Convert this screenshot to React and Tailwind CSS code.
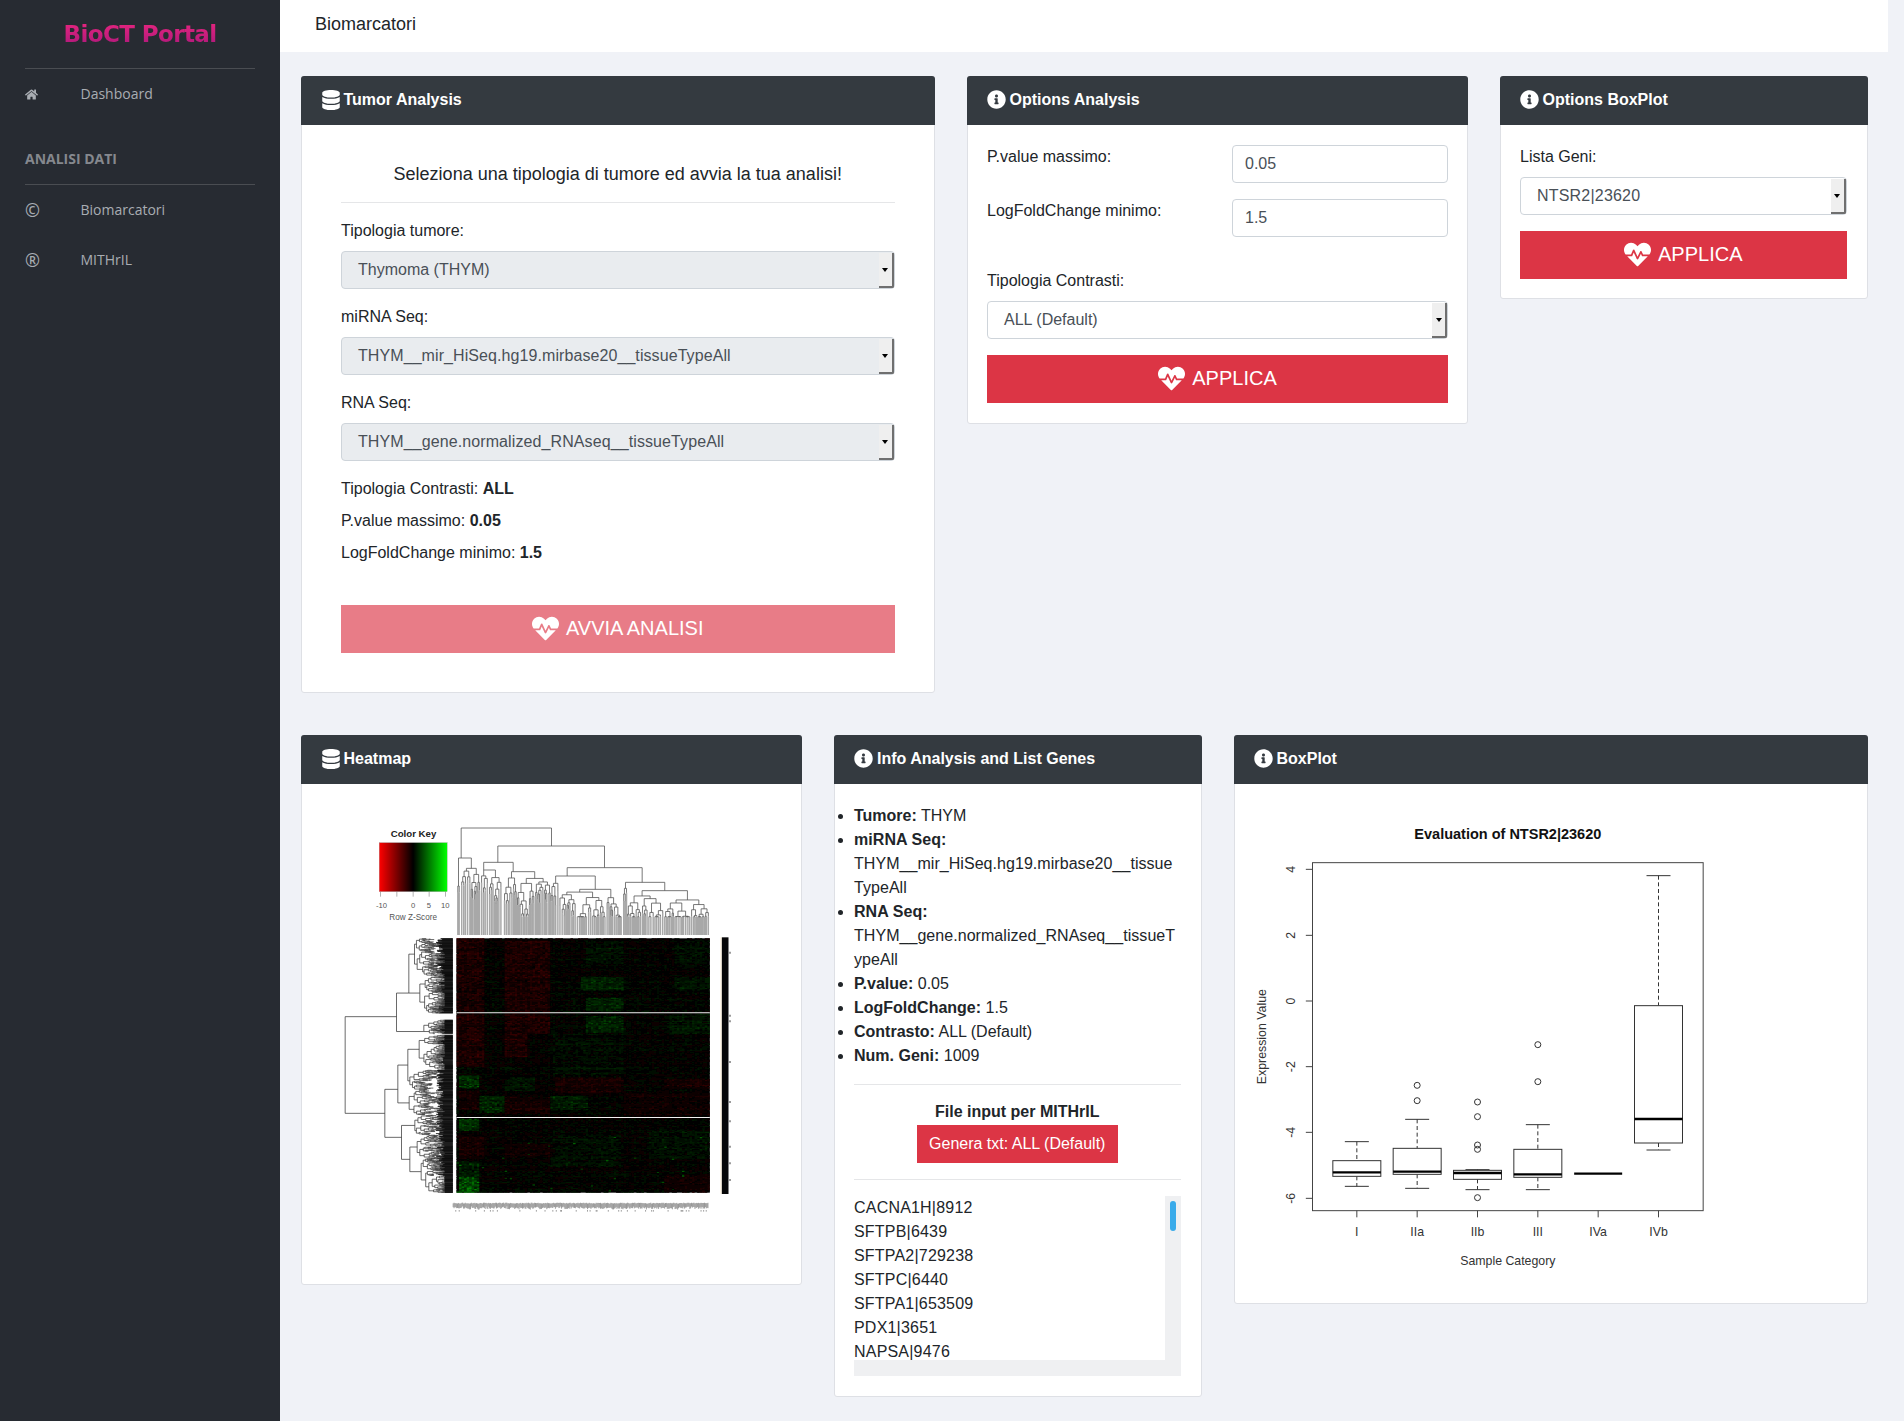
import React from 'react';
import { FaDatabase, FaHeartbeat, FaHome, FaInfoCircle } from 'react-icons/fa';

const FONT = { fontFamily: '"Liberation Sans", Arial, sans-serif' };

// seeded random, so the charts look the same on every render
const makeRandom = (seed) => () => {
  seed = (seed + 0x6d2b79f5) | 0;
  let t = Math.imul(seed ^ (seed >>> 15), 1 | seed);
  t = (t + Math.imul(t ^ (t >>> 7), 61 | t)) ^ t;
  return ((t ^ (t >>> 14)) >>> 0) / 4294967296;
};

// dendrogram: n = fixed merge, s = span filled in with random merges, cx = where the parent joins
const n = (t, a, b, cx) => ({ t, a, b, cx });
const s = (x0, x1, t, cx) => ({ t, x0, x1, cx });

const buildDendrogram = (tree, opts) => {
  const rnd = makeRandom(opts.seed);
  const joins = [];
  const leaves = [];
  const grow = (x0, x1, t) => {
    if (x1 - x0 <= opts.leaf) {
      const c = (x0 + x1) / 2;
      leaves.push([c, Math.max(t, opts.minLeaf + rnd() * opts.leafSpread)]);
      return c;
    }
    const m = x0 + (x1 - x0) * (0.22 + rnd() * 0.56);
    const drop = () => Math.min(opts.maxTop, t + opts.drop * (0.3 + rnd()));
    const ta = drop();
    const tb = drop();
    const ca = grow(x0, m, ta);
    const cb = grow(m, x1, tb);
    joins.push([ca, cb, t, ta, tb]);
    return (ca + cb) / 2;
  };
  const clampTo = (cx, ca, cb, c) => (cx === undefined ? c : Math.max(Math.min(ca, cb), Math.min(Math.max(ca, cb), cx)));
  const walk = (node) => {
    if (node.a) {
      const ca = walk(node.a);
      const cb = walk(node.b);
      joins.push([ca, cb, node.t, node.a.t, node.b.t]);
      return clampTo(node.cx, ca, cb, (ca + cb) / 2);
    }
    const c = grow(node.x0, node.x1, node.t);
    const last = joins[joins.length - 1];
    return node.x1 - node.x0 > opts.leaf ? clampTo(node.cx, last[0], last[1], c) : c;
  };
  walk(tree);
  return { joins, leaves };
};

const topTree = n(84,
  n(174, s(410, 418, 258), s(420, 480, 205), 422),
  n(138,
    n(187, s(480, 545, 210, 488), s(550, 690, 215, 578), 532),
    n(203,
      n(228, s(690, 715, 250), s(715, 905, 268), 740),
      n(247, s(907, 920, 265), s(920, 1167, 272), 965),
      852,
    ),
    693,
  ),
);

const leftTree = n(74,
  n(228,
    n(265, s(415, 530, 282), s(530, 640, 298), 602),
    s(660, 702, 310, 697),
    650,
  ),
  n(193,
    n(232,
      n(262, s(705, 810, 296), s(810, 870, 268)),
      s(870, 945, 266),
      868,
    ),
    n(243,
      s(945, 1005, 283),
      n(268, s(1005, 1075, 290), s(1075, 1178, 302)),
      1012,
    ),
    940,
  ),
);

const topD = buildDendrogram(topTree, { seed: 11, leaf: 7.6, drop: 22, maxTop: 350, minLeaf: 0, leafSpread: 0 });
const leftD = buildDendrogram(leftTree, { seed: 29, leaf: 2, drop: 13, maxTop: 372, minLeaf: 345, leafSpread: 25 });

const topJoinPath = topD.joins
  .map(([a, b, t, ta, tb]) => `M${a} ${ta}V${t}H${b}V${tb}`)
  .join('');
const topLeafPath = topD.leaves.map(([c, t]) => `M${c} ${t}V405`).join('');
const leftJoinPath = leftD.joins
  .map(([a, b, t, ta, tb]) => `M${ta} ${a}H${t}V${b}H${tb}`)
  .join('');
const leftLeafPath = leftD.leaves.map(([c, t]) => `M${t} ${c}H397`).join('');

// [x0, x1, y0, y1, value]: value < 0 is red, value > 0 is green
const HEAT_BLOCKS = [
  [408, 485, 415, 640, -0.5], [550, 685, 420, 640, -0.5], [408, 485, 640, 800, -0.5],
  [550, 620, 700, 770, -0.5], [550, 685, 640, 700, -0.5], [780, 905, 530, 570, 0.5],
  [790, 905, 590, 630, 0.45], [790, 905, 645, 695, 0.5], [790, 905, 420, 490, 0.25],
  [1060, 1168, 420, 490, 0.2], [1060, 1168, 530, 570, 0.25], [1040, 1168, 640, 700, 0.3],
  [415, 470, 825, 865, 0.7], [475, 550, 885, 935, 0.55], [685, 800, 885, 930, 0.4],
  [410, 470, 955, 990, 0.7], [410, 470, 1130, 1175, 1.2], [410, 470, 1080, 1130, 0.4],
  [685, 900, 1000, 1100, 0.2], [980, 1168, 990, 1075, 0.22], [550, 640, 830, 870, 0.28],
  [690, 905, 700, 830, 0.14], [410, 475, 870, 930, -0.35], [550, 685, 890, 940, -0.4],
  [700, 905, 830, 880, -0.35], [1030, 1168, 835, 865, -0.35], [905, 1168, 880, 945, -0.25],
  [1030, 1168, 1120, 1178, -0.3], [410, 485, 1010, 1075, -0.4], [550, 700, 1030, 1070, -0.25],
];

const LEVELS = 14;
const heatColor = (level) => {
  const v = level / LEVELS;
  return v < 0
    ? `rgb(${Math.round(-v * 120)},0,0)`
    : `rgb(0,${Math.round(v * 140)},0)`;
};

const buildHeat = () => {
  const rnd = makeRandom(7);
  const buckets = {};
  const cols = 100;
  const rows = 210;
  const w = 760 / cols;
  const h = 763 / rows;
  for (let r = 0; r < rows; r++) {
    const y = 415 + r * h;
    const rowOff = (rnd() - 0.5) * 0.12;
    for (let c = 0; c < cols; c++) {
      const x = 408 + c * w;
      let v = rowOff + (rnd() - 0.5) * 0.26;
      HEAT_BLOCKS.forEach(([x0, x1, y0, y1, val]) => {
        if (x >= x0 && x < x1 && y >= y0 && y < y1) v += val * (0.2 + rnd() * 0.6);
      });
      if (rnd() < 0.006 && y > 1000) v += 0.6;
      const level = Math.max(-LEVELS, Math.min(LEVELS, Math.round(v * LEVELS)));
      if (level === 0) continue;
      buckets[level] = (buckets[level] || '') +
        `M${x.toFixed(1)} ${y.toFixed(1)}h${w.toFixed(2)}v${h.toFixed(2)}h-${w.toFixed(2)}z`;
    }
  }
  return Object.entries(buckets);
};

const heatCells = buildHeat();

// the blurred sample names under the heatmap
const sampleNoise = (() => {
  const rnd = makeRandom(3);
  let d = '';
  for (let x = 398; x < 1165; x += 2.6) {
    d += `M${x} ${1208 + rnd() * 3}v${11 + rnd() * 7}`;
    if (rnd() < 0.12) d += `M${x} 1230v5`;
  }
  return d;
})();

const HeatmapPlot = () => (
  <svg className="block" width="458" height="460" viewBox="4.5 12 1374 1380" style={FONT}>
    <defs>
      <filter id="soft" x="-2%" y="-2%" width="104%" height="104%">
        <feGaussianBlur stdDeviation="0.9" />
      </filter>
      <linearGradient id="key">
        <stop offset="0" stopColor="#ff0000" />
        <stop offset="0.5" stopColor="#000000" />
        <stop offset="1" stopColor="#00ff00" />
      </linearGradient>
    </defs>
    <text x="279" y="110" fontSize="29" fontWeight="700" textAnchor="middle" fill="#222">Color Key</text>
    <rect x="176" y="128" width="204" height="147" fill="url(#key)" stroke="#999" strokeWidth="1" />
    <path d="M180 275v15M229 275v15M278 275v15M326 275v15M375 275v15" stroke="#666" strokeWidth="1.5" />
    <g fontSize="23" fill="#555" textAnchor="middle">
      <text x="183" y="324">-10</text>
      <text x="278" y="324">0</text>
      <text x="325" y="324">5</text>
      <text x="374" y="324">10</text>
      <text x="278" y="361" fontSize="24.5">Row Z-Score</text>
    </g>

    <g fill="none">
      <path d={topLeafPath} stroke="#a8a8a8" strokeWidth="4.4" />
      <path d={topJoinPath} stroke="#555" strokeWidth="2.4" />
      <path d={leftLeafPath} stroke="#0a0a0a" strokeWidth="2.6" />
      <path d={leftJoinPath} stroke="#333" strokeWidth="2.2" />
    </g>

    <rect x="408" y="415" width="760" height="763" fill="#000" />
    <g filter="url(#soft)">
      {heatCells.map(([level, d]) => (
        <path key={level} d={d} fill={heatColor(Number(level))} />
      ))}
    </g>
    <rect x="408" y="636" width="760" height="4" fill="#b5b5b5" />
    <rect x="408" y="951" width="760" height="3" fill="#f2f2f2" />

    <rect x="1199" y="412" width="5" height="770" fill="#fff6e6" />
    <rect x="1204" y="412" width="20" height="770" fill="#060608" />
    <path d="M1226 458h5M1226 647h5M1226 664h5M1226 786h5M1226 906h5M1226 964h5M1226 1040h5M1226 1090h5M1226 1140h5" stroke="#888" strokeWidth="6" />
    <path d={sampleNoise} stroke="#6a6a6a" strokeWidth="1.9" fill="none" />
  </svg>
);

// box plot, in the same 3x coordinates as the rest of the drawing
const BOXES = [
  { x: 349, label: 'I', top: 1082, bot: 1129, med: 1117, hi: 1025, lo: 1159, out: [] },
  { x: 530, label: 'IIa', top: 1045, bot: 1123, med: 1115, hi: 958, lo: 1165, out: [856, 902] },
  { x: 711, label: 'IIb', top: 1111, bot: 1138, med: 1119, hi: 1109, lo: 1169, out: [906, 950, 1035, 1048, 1193] },
  { x: 892, label: 'III', top: 1048, bot: 1132, med: 1123, hi: 974, lo: 1169, out: [734, 845] },
  { x: 1073, label: 'IVa', top: 1121, bot: 1121, med: 1121, hi: 1121, lo: 1121, out: [] },
  { x: 1254, label: 'IVb', top: 617, bot: 1029, med: 957, hi: 227, lo: 1050, out: [] },
];

const Y_TICKS = [
  { y: 208, label: '4' },
  { y: 406, label: '2' },
  { y: 603, label: '0' },
  { y: 800, label: '-2' },
  { y: 997, label: '-4' },
  { y: 1195, label: '-6' },
];

const BoxPlotChart = () => (
  <svg className="block" width="480" height="479" viewBox="43.5 12 1440 1437" style={FONT}>
    <text x="802" y="116" fontSize="43.5" fontWeight="700" textAnchor="middle" fill="#111">
      Evaluation of NTSR2|23620
    </text>
    <rect x="216" y="188" width="1172" height="1044" fill="none" stroke="#444" strokeWidth="3" />
    {Y_TICKS.map((tick) => (
      <g key={tick.label}>
        <path d={`M196 ${tick.y}H216`} stroke="#444" strokeWidth="3" />
        <text
          x="152"
          y={tick.y}
          fontSize="37"
          fill="#333"
          textAnchor="middle"
          dominantBaseline="central"
          transform={`rotate(-90 152 ${tick.y})`}
        >
          {tick.label}
        </text>
      </g>
    ))}
    <text x="65" y="710" fontSize="37" fill="#333" textAnchor="middle" dominantBaseline="central" transform="rotate(-90 65 710)">
      Expression Value
    </text>
    {BOXES.map((box) => (
      <g key={box.label} fill="none" stroke="#333" strokeWidth="3">
        <path d={`M${box.x} 1232V1252`} stroke="#444" />
        <text x={box.x} y="1308" fontSize="37" fill="#333" stroke="none" textAnchor="middle">{box.label}</text>
        {box.hi !== box.lo && (
          <>
            <path d={`M${box.x} ${box.hi}V${box.top}M${box.x} ${box.bot}V${box.lo}`} strokeDasharray="12 8" />
            <path d={`M${box.x - 36} ${box.hi}h72M${box.x - 36} ${box.lo}h72`} />
            <rect x={box.x - 72} y={box.top} width="144" height={box.bot - box.top} fill="#fff" />
          </>
        )}
        <path d={`M${box.x - 72} ${box.med}h144`} stroke="#000" strokeWidth="7" />
        {box.out.map((y) => (
          <circle key={y} cx={box.x} cy={y} r="9" />
        ))}
      </g>
    ))}
    <text x="802" y="1395" fontSize="37" fill="#333" textAnchor="middle">Sample Category</text>
  </svg>
);

const Card = ({ icon, title, width, children }) => (
  <div className={`flex-none bg-white border border-[#dee0e5] rounded-[3px] ${width}`}>
    <div className="-mx-px -mt-px h-[49px] pl-5 pb-[2px] flex items-center gap-[3px] bg-[#343a40] text-white font-bold rounded-t-[3px]">
      {icon === 'db' ? <FaDatabase size={20} /> : <FaInfoCircle size={19} className="mr-[1px]" />}
      <span>{title}</span>
    </div>
    {children}
  </div>
);

const FakeSelect = ({ value, disabled, textClass = '' }) => (
  <div
    className={`flex items-center h-[38px] border border-[#ced4da] rounded-[4px] pl-4 text-[#495057] ${
      disabled ? 'bg-[#e9ecef]' : 'bg-white'
    }`}
  >
    <span className={`flex-1 ${textClass}`}>{value}</span>
    <span className="relative flex-none w-[15px] h-[35px] mt-px bg-[#efefef] border-r-2 border-b-2 border-[#6f6f6f] rounded-br-[2px] flex items-center justify-center">
      <span className="w-0 h-0 border-x-[3.5px] border-x-transparent border-t-[4px] border-t-black" />
    </span>
  </div>
);

const RedButton = ({ label, disabled }) => (
  <div
    className={`h-12 pb-[2px] flex items-center justify-center gap-[7px] text-white text-xl ${
      disabled ? 'bg-[#e87c87]' : 'bg-[#dc3545]'
    }`}
  >
    <FaHeartbeat size={27} />
    <span>{label}</span>
  </div>
);

const FakeInput = ({ value }) => (
  <div className="w-[216px] h-[38px] flex items-center px-3 border border-[#ced4da] rounded-[4px] text-[#495057]">
    {value}
  </div>
);

const SideItem = ({ icon, label }) => (
  <div className="h-[50px] flex items-center text-sm text-[#a9adb3]">
    <span className="w-[55.5px] flex items-center text-lg">{icon}</span>
    <span>{label}</span>
  </div>
);

const Sidebar = () => (
  <aside className="flex-none w-[280px] bg-[#272b32] px-[25px]" style={{ fontFamily: '"Open Sans", sans-serif' }}>
    <div className="h-[69px] border-b border-[#4a4d52] flex items-center justify-center">
      <span
        className="text-[23px] leading-8 font-bold tracking-[-0.6px] bg-gradient-to-b from-[#f0267f] to-[#a5157a] bg-clip-text text-transparent"
        style={{ fontFamily: '"DejaVu Sans", sans-serif' }}
      >
        BioCT Portal
      </span>
    </div>
    <SideItem icon={<FaHome size={13} />} label="Dashboard" />
    <div className="h-[66px] pt-[30px] border-b border-[#4a4d52] text-sm leading-5 font-bold text-[#85888e]">
      ANALISI DATI
    </div>
    <SideItem icon="©" label="Biomarcatori" />
    <SideItem icon="®" label="MITHrIL" />
  </aside>
);

const GENES = [
  'CACNA1H|8912',
  'SFTPB|6439',
  'SFTPA2|729238',
  'SFTPC|6440',
  'SFTPA1|653509',
  'PDX1|3651',
  'NAPSA|9476',
];

const InfoList = () => (
  <ul className="list-disc">
    <li><b>Tumore:</b> THYM</li>
    <li className="break-words tracking-[0.05px]"><b>miRNA Seq:</b> THYM__mir_HiSeq.hg19.mirbase20__tissueTypeAll</li>
    <li className="break-words tracking-[0.05px]"><b>RNA Seq:</b> THYM__gene.normalized_RNAseq__tissueTypeAll</li>
    <li><b>P.value:</b> 0.05</li>
    <li><b>LogFoldChange:</b> 1.5</li>
    <li><b>Contrasto:</b> ALL (Default)</li>
    <li><b>Num. Geni:</b> 1009</li>
  </ul>
);

const GeneList = () => (
  <div className="h-[180px] flex flex-col mt-4">
    <div className="h-[164px] flex">
      <div className="flex-1 overflow-hidden tracking-[0.2px]">
        {GENES.map((gene) => (
          <div key={gene}>{gene}</div>
        ))}
      </div>
      <div className="w-4 bg-[#eff0f2] pt-[5px] flex justify-center">
        <div className="w-[6px] h-[30px] rounded-[3px] bg-[#3aabea]" />
      </div>
    </div>
    <div className="h-4 bg-[#eff0f2]" />
  </div>
);

export default function App() {
  return (
    <div className="flex min-h-screen bg-[#f0f2f7] text-[#212529] text-base leading-6" style={FONT}>
      <Sidebar />
      <main className="flex-none w-[1608px]">
        <div className="h-[52px] bg-white pl-[35px] flex items-center text-lg pb-[4px]">Biomarcatori</div>

        <div className="pl-[20.5px] pt-6">
          <div className="flex items-start gap-8">
            <Card icon="db" title="Tumor Analysis" width="w-[634px]">
              <div className="pt-9 pb-[39px] pl-[39.5px] pr-[39px]">
                <div className="text-lg leading-[27px] text-center">
                  Seleziona una tipologia di tumore ed avvia la tua analisi!
                </div>
                <div className="mt-[14px] h-px bg-[#e5e6e8]" />
                <div className="mt-4 mb-2">Tipologia tumore:</div>
                <FakeSelect value="Thymoma (THYM)" disabled />
                <div className="mt-4 mb-2">miRNA Seq:</div>
                <FakeSelect value="THYM__mir_HiSeq.hg19.mirbase20__tissueTypeAll" textClass="tracking-[0.08px]" disabled />
                <div className="mt-4 mb-2">RNA Seq:</div>
                <FakeSelect value="THYM__gene.normalized_RNAseq__tissueTypeAll" textClass="tracking-[0.1px]" disabled />
                <div className="mt-4 flex flex-col gap-2">
                  <div>Tipologia Contrasti: <b>ALL</b></div>
                  <div>P.value massimo: <b>0.05</b></div>
                  <div>LogFoldChange minimo: <b>1.5</b></div>
                </div>
                <div className="mt-10">
                  <RedButton label="AVVIA ANALISI" disabled />
                </div>
              </div>
            </Card>

            <Card icon="info" title="Options Analysis" width="w-[501px]">
              <div className="py-5 pl-[19.5px] pr-[18.5px]">
                <div className="flex justify-between">
                  <span>P.value massimo:</span>
                  <FakeInput value="0.05" />
                </div>
                <div className="flex justify-between mt-4">
                  <span>LogFoldChange minimo:</span>
                  <FakeInput value="1.5" />
                </div>
                <div className="mt-8 mb-2">Tipologia Contrasti:</div>
                <FakeSelect value="ALL (Default)" />
                <div className="mt-4">
                  <RedButton label="APPLICA" />
                </div>
              </div>
            </Card>

            <Card icon="info" title="Options BoxPlot" width="w-[368px]">
              <div className="pl-[19.5px] pr-5 pt-5 pb-[19px]">
                <div className="mb-2">Lista Geni:</div>
                <FakeSelect value="NTSR2|23620" textClass="tracking-[0.2px]" />
                <div className="mt-4">
                  <RedButton label="APPLICA" />
                </div>
              </div>
            </Card>
          </div>

          <div className="flex items-start gap-8 mt-[42px]">
            <Card icon="db" title="Heatmap" width="w-[501.5px]">
              <div className="p-5">
                <HeatmapPlot />
              </div>
            </Card>

            <Card icon="info" title="Info Analysis and List Genes" width="w-[367.5px]">
              <div className="py-5 pl-[19px] pr-5">
                <InfoList />
                <div className="mt-4 h-px bg-[#e5e6e8]" />
                <div className="mt-[15px] text-center font-bold">File input per MITHrIL</div>
                <div className="flex justify-center">
                  <div className="h-[38px] w-[201px] mt-px pb-px flex items-center justify-center bg-[#dc3545] text-white">
                    Genera txt: ALL (Default)
                  </div>
                </div>
                <div className="mt-4 h-px bg-[#e5e6e8]" />
                <GeneList />
              </div>
            </Card>

            <Card icon="info" title="BoxPlot" width="w-[634px]">
              <div className="p-5">
                <BoxPlotChart />
              </div>
            </Card>
          </div>
        </div>
      </main>
    </div>
  );
}
